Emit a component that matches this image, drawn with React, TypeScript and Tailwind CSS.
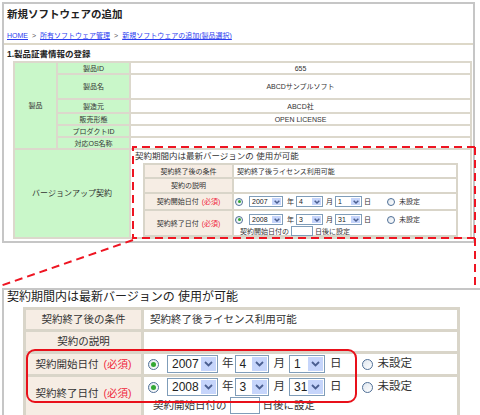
import React from "react";

const Chevron = ({ big }: { big?: boolean }) => (
  <svg width={big ? 9 : 6} height={big ? 6 : 4} viewBox="0 0 9 6" fill="none">
    <path d="M1 1l3.5 3.5L8 1" stroke="#4b5f90" strokeWidth={big ? 1.8 : 2.2} />
  </svg>
);

const Sel = ({ v, w, big }: { v: string; w: string; big?: boolean }) => (
  <div
    className={`${w} ${big ? "h-[18px] text-[12px]" : "h-[11px] text-[7px]"} flex shrink-0 border border-[#7f9db9] bg-white`}>
    <span className={`flex-1 flex items-center leading-none text-[#222] ${big ? "pl-[4px]" : "pl-[2px]"}`}>{v}</span>
    <span className={`${big ? "w-[15px]" : "w-[9px]"} m-[1px] bg-[#c6d5fb] flex items-center justify-center`}>
      <Chevron big={big} />
    </span>
  </div>
);

const Radio = ({ on, big }: { on?: boolean; big?: boolean }) => (
  <span
    className={`${big ? "w-[11px] h-[11px]" : "w-[8px] h-[8px]"} shrink-0 rounded-full border border-[#4f6f96] bg-gradient-to-br from-[#dfe6ee] to-white flex items-center justify-center`}>
    {on && <span className={`${big ? "w-[5px] h-[5px]" : "w-[3px] h-[3px]"} rounded-full bg-[#33a833]`} />}
  </span>
);

const Req = () => <span className="text-[#f0283c]">(必須)</span>;

// 日付行 (上の縮小版)
const DateSmall = ({ y, m, d }: { y: string; m: string; d: string }) => (
  <div className="flex items-center text-[7px] leading-none">
    <Radio on />
    <span className="ml-[6px]"><Sel v={y} w="w-[34px]" /></span>
    <span className="ml-[4px]">年</span>
    <span className="ml-[2px]"><Sel v={m} w="w-[27px]" /></span>
    <span className="ml-[3px]">月</span>
    <span className="ml-[2px]"><Sel v={d} w="w-[27px]" /></span>
    <span className="ml-[2px]">日</span>
    <span className="ml-[16px]"><Radio /></span>
    <span className="ml-[4px]">未設定</span>
  </div>
);

// 日付行 (拡大版)
const DateBig = ({ y, m, d }: { y: string; m: string; d: string }) => (
  <div className="flex items-center text-[11.5px] leading-none">
    <Radio on big />
    <span className="ml-[8px]"><Sel v={y} w="w-[51px]" big /></span>
    <span className="ml-[4px]">年</span>
    <span className="ml-[1px]"><Sel v={m} w="w-[34px]" big /></span>
    <span className="ml-[5px]">月</span>
    <span className="ml-[4px]"><Sel v={d} w="w-[36px]" big /></span>
    <span className="ml-[5px]">日</span>
    <span className="ml-[20px]"><Radio big /></span>
    <span className="ml-[5px]">未設定</span>
  </div>
);

const G = "bg-[#c9f7c9] flex items-center justify-center";
const V = "bg-white flex items-center justify-center";

export default function App() {
  return (
    <div className="relative w-[480px] h-[415px] overflow-hidden bg-white text-[#333] font-['Liberation_Sans','Noto_Sans_CJK_JP',sans-serif]">
      {/* 上: 画面全体 */}
      <div className="ml-[2px] mt-[2px] w-[473px] h-[241px] border-2 border-[#c6c6c6] flex flex-col">
        <h1 className="ml-[3px] mt-[4px] text-[10.5px] leading-[13px] font-bold text-[#222]">新規ソフトウェアの追加</h1>
        <nav className="ml-[3px] mt-[10px] flex gap-[4px] text-[7px] leading-[9px]">
          <a className="text-[#2b3cf0] underline">HOME</a>
          <span className="text-[#555]">&gt;</span>
          <a className="text-[#2b3cf0] underline">所有ソフトウェア管理</a>
          <span className="text-[#555]">&gt;</span>
          <a className="text-[#2b3cf0] underline">新規ソフトウェアの追加(製品選択)</a>
        </nav>
        <div className="mt-[3px] h-[2px] bg-[#ddd8c8]" />
        <h2 className="ml-[3px] mt-[4px] text-[8.5px] leading-[10px] font-bold text-[#222]">1.製品証書情報の登録</h2>

        <div className="ml-[9px] mt-[2px] w-[459px] grid grid-cols-[41px_71px_339px] grid-rows-[10px_23px_12px_10px_10px_10px_87px] gap-[2px] p-[2px] bg-[#dcd8cc] text-[7px] leading-none">
          <div className={`${G} row-span-6`}>製品</div>
          <div className={G}>製品ID</div>
          <div className={V}>655</div>
          <div className={G}>製品名</div>
          <div className={V}>ABCDサンプルソフト</div>
          <div className={G}>製造元</div>
          <div className={V}>ABCD社</div>
          <div className={G}>販売形態</div>
          <div className={V}>OPEN LICENSE</div>
          <div className={G}>プロダクトID</div>
          <div className={V} />
          <div className={G}>対応OS名称</div>
          <div className={V} />
          <div className={`${G} col-span-2 text-[8px]`}>バージョンアップ契約</div>
          <div className="bg-white flex flex-col">
            <p className="pl-[4px] pt-[1px] text-[8.5px] leading-[10px]">契約期間内は最新バージョンの 使用が可能</p>
            <div className="ml-[12px] mt-[2px] w-[315px] grid grid-cols-[87px_222px] grid-rows-[12px_13px_15px_24px] gap-[2px] p-[2px] bg-[#d9d5c9]">
              <div className="bg-[#f6ede4] flex items-center justify-center">契約終了後の条件</div>
              <div className="bg-white flex items-center pl-[3px]">契約終了後ライセンス利用可能</div>
              <div className="bg-[#f6ede4] flex items-center justify-center">契約の説明</div>
              <div className="bg-white" />
              <div className="bg-[#f6ede4] flex items-center justify-center gap-[3px]">契約開始日付<Req /></div>
              <div className="bg-white flex items-center pl-[1px]">
                <DateSmall y="2007" m="4" d="1" />
              </div>
              <div className="bg-[#f6ede4] flex items-center justify-center gap-[3px]">契約終了日付<Req /></div>
              <div className="bg-white flex flex-col pl-[1px] pt-[3px]">
                <DateSmall y="2008" m="3" d="31" />
                <div className="mt-[1px] flex items-center pl-[5px]">
                  <span>契約開始日付の</span>
                  <span className="ml-[2px] w-[22px] h-[10px] border border-[#7f9db9] bg-white" />
                  <span className="ml-[2px]">日後に設定</span>
                </div>
              </div>
            </div>
          </div>
        </div>
      </div>

      {/* 下: 拡大図 */}
      <div className="ml-[2px] mt-[45px] w-[500px] h-[140px] border-2 border-[#c6c6c6] flex flex-col">
        <p className="pl-[3px] text-[12px] leading-[14px] text-[#222]">契約期間内は最新バージョンの 使用が可能</p>
        <div className="ml-[19px] mt-[3px] w-[437px] grid grid-cols-[115px_313px] grid-rows-[19px_19px_20px_40px] gap-[3px] p-[3px] bg-[#d9d5c9] text-[10.5px] leading-none">
          <div className="bg-[#f6ede4] flex items-center justify-center">契約終了後の条件</div>
          <div className="bg-white flex items-center pl-[6px]">契約終了後ライセンス利用可能</div>
          <div className="bg-[#f6ede4] flex items-center justify-center">契約の説明</div>
          <div className="bg-white" />
          <div className="bg-[#f6ede4] flex items-center justify-center gap-[5px]">契約開始日付<Req /></div>
          <div className="bg-white flex items-center pl-[4px]">
            <DateBig y="2007" m="4" d="1" />
          </div>
          <div className="bg-[#f6ede4] flex items-start justify-center gap-[5px] pt-[11px]">契約終了日付<Req /></div>
          <div className="bg-white flex flex-col pl-[4px] pt-[1px]">
            <DateBig y="2008" m="3" d="31" />
            <div className="mt-[1px] flex items-center pl-[5px]">
              <span>契約開始日付の</span>
              <span className="ml-[3px] w-[30px] h-[17px] border border-[#7f9db9] bg-white" />
              <span className="ml-[3px]">日後に設定</span>
            </div>
          </div>
        </div>
      </div>

      {/* 注記: 拡大範囲を示す赤い破線 */}
      <svg className="absolute left-0 top-0 pointer-events-none" width="480" height="415">
        <path
          d="M475 147H133V238H475M475 147V287M133 240L0 286"
          fill="none"
          stroke="#ee1522"
          strokeWidth="2"
          strokeDasharray="8 5"
        />
      </svg>
      <div className="absolute left-[26px] top-[349px] w-[331px] h-[54px] border-2 border-[#e8101a] rounded-[9px] pointer-events-none" />
    </div>
  );
}
